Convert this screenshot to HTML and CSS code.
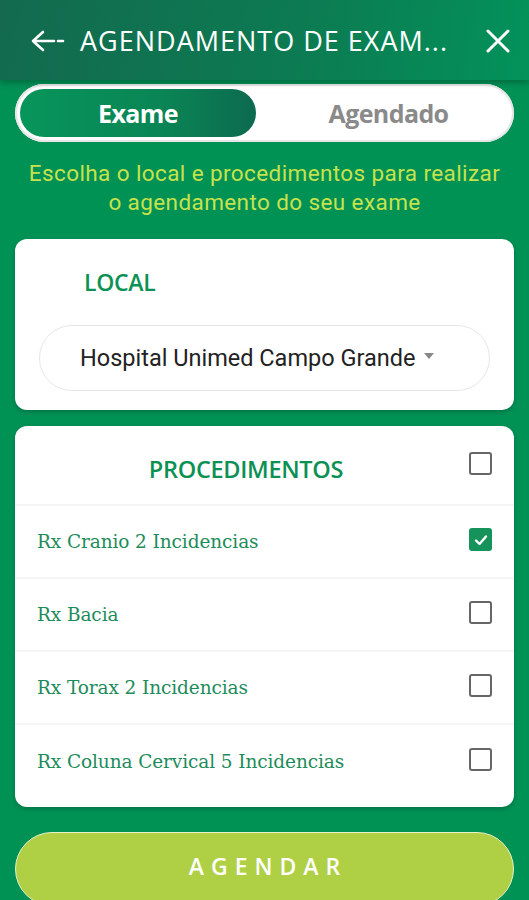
FILE: index.html
```html
<!DOCTYPE html>
<html lang="pt">
<head>
    <meta charset="UTF-8" />
    <meta name="viewport" content="width=device-width, initial-scale=1.0" />
    <title>Agendamento de Exames</title>
    <link rel="stylesheet" href="styles.css">
</head>
<body>
<!-- Barra superior -->
<div class="topbar">
    <svg class="back" width="36" height="24" viewBox="0 0 36 24">
        <path d="M13 3 L3 12 L13 21 M3 12 H24" fill="none" stroke="#fff" stroke-width="2.6" stroke-linecap="round" stroke-linejoin="round"/>
        <path d="M28 12 H33" stroke="#fff" stroke-width="2.6" stroke-linecap="round"/>
    </svg>
    <h1 class="titulo">AGENDAMENTO DE EXAM...</h1>
    <svg class="fechar" width="26" height="26" viewBox="0 0 26 26">
        <path d="M3 3 L23 23 M23 3 L3 23" stroke="#fff" stroke-width="3" stroke-linecap="round"/>
    </svg>
</div>

<div class="conteudo">
    <div class="toggle">
        <button class="aba ativa">Exame</button>
        <button class="aba">Agendado</button>
    </div>

    <p class="instrucao">Escolha o local e procedimentos para realizar o agendamento do seu exame</p>

    <div class="card card-local">
        <h2 class="rotulo">LOCAL</h2>
        <div class="select">
            <span>Hospital Unimed Campo Grande</span>
            <span class="caret"></span>
        </div>
    </div>

    <div class="card card-proc">
        <div class="proc-head">
            <h2 class="rotulo-centro">PROCEDIMENTOS</h2>
            <span class="check"></span>
        </div>
        <div id="listaProcedimentos"></div>
    </div>

    <button class="agendar">AGENDAR</button>
</div>

<script>
    const procedimentos = [
        { nome: 'Rx Cranio 2 Incidencias', marcado: true },
        { nome: 'Rx Bacia', marcado: false },
        { nome: 'Rx Torax 2 Incidencias', marcado: false },
        { nome: 'Rx Coluna Cervical 5 Incidencias', marcado: false }
    ];

    const lista = document.getElementById('listaProcedimentos');
    procedimentos.forEach(function(p) {
        const linha = document.createElement('div');
        linha.classList.add('proc-item');
        linha.innerHTML = `
            <span class="proc-nome">${p.nome}</span>
            <span class="check ${p.marcado ? 'marcado' : ''}">${p.marcado ? '<svg width="16" height="16" viewBox="0 0 16 16"><path d="M3 8.5 L6.5 12 L13 4.5" fill="none" stroke="#fff" stroke-width="2.4" stroke-linecap="round" stroke-linejoin="round"/></svg>' : ''}</span>
        `;
        linha.querySelector('.check').addEventListener('click', function() {
            p.marcado = !p.marcado;
        });
        lista.appendChild(linha);
    });
</script>
</body>
</html>
```

FILE: styles.css
```css
body {
    margin: 0;
    background-color: #009155;
    font-family: Roboto, "Noto Sans", sans-serif;
    height: 900px;
    overflow: hidden;
}

/* Barra superior */
.topbar {
    height: 80px;
    display: flex;
    align-items: center;
    padding: 0 18px 0 30px;
    background: linear-gradient(100deg, #136a4e 0%, #0c7a52 55%, #03925a 100%);
    box-shadow: 0 3px 6px rgba(0,0,0,0.25);
    position: relative;
    z-index: 2;
}

.back {
    margin-right: 14px;
    margin-top: 2px;
}

.titulo {
    flex: 1;
    margin: 0;
    color: #fff;
    font-family: "Open Sans", sans-serif;
    font-weight: 400;
    font-size: 27px;
    letter-spacing: 1px;
    white-space: nowrap;
}

.fechar {
    margin-top: 2px;
}

.conteudo {
    padding: 4px 15px 0 15px;
}

/* Abas */
.toggle {
    display: flex;
    height: 58px;
    background-color: #fff;
    border-radius: 30px;
    padding: 5px;
    box-sizing: border-box;
    box-shadow: inset 0 0 0 2px #e6e6e6;
}

.aba {
    flex: 1;
    border: none;
    background: transparent;
    font-family: "Open Sans", sans-serif;
    font-weight: 700;
    font-size: 25px;
    letter-spacing: -0.6px;
    color: #8a8a8a;
    border-radius: 26px;
    padding: 0;
}

.aba.ativa {
    flex: 0 0 236px;
    color: #fff;
    background: linear-gradient(90deg, #07955b 0%, #0a8555 60%, #0d6a4f 100%);
}

.aba + .aba {
    padding-left: 12px;
}

.instrucao {
    margin: 17px 0 22px 0;
    text-align: center;
    color: #c6e24c;
    font-size: 22.5px;
    letter-spacing: 0.4px;
    line-height: 29px;
    padding: 0 12px;
}

/* Cards */
.card {
    background-color: #fff;
    border-radius: 12px;
    box-shadow: 0 2px 4px rgba(0,0,0,0.2);
    margin-bottom: 16px;
}

.card-local {
    padding: 27px 24px 19px 24px;
}

.rotulo {
    margin: 0 0 27px 45px;
    color: #0c9155;
    font-family: "Open Sans", sans-serif;
    font-weight: 600;
    font-size: 23px;
    letter-spacing: -0.3px;
}

.select {
    height: 66px;
    border: 1px solid #e6e6e6;
    border-radius: 34px;
    display: flex;
    align-items: center;
    padding: 0 40px;
    box-sizing: border-box;
    font-size: 23.5px;
    color: #222;
}

.caret {
    width: 0;
    height: 0;
    border-left: 5px solid transparent;
    border-right: 5px solid transparent;
    border-top: 6px solid #888;
    margin-left: 9px;
    margin-top: -4px;
}

.card-proc {
    padding: 0;
    margin-bottom: 25px;
}

.proc-head {
    height: 80px;
    display: flex;
    align-items: center;
    padding: 0 22px 0 0;
    border-bottom: 2px solid #f5f5f5;
    box-sizing: border-box;
}

.rotulo-centro {
    flex: 1;
    margin: 8px 0 0 0;
    text-align: center;
    color: #0c9155;
    font-family: "Open Sans", sans-serif;
    font-weight: 600;
    font-size: 23.5px;
    letter-spacing: -0.3px;
    padding-left: 8px;
}

.proc-item {
    height: 73px;
    display: flex;
    align-items: center;
    padding: 0 22px;
    border-bottom: 2px solid #f5f5f5;
    box-sizing: border-box;
}

.proc-item:last-child {
    border-bottom: none;
    height: 82px;
    padding-bottom: 10px;
}

.proc-nome {
    flex: 1;
    font-family: "DejaVu Serif", "Liberation Serif", serif;
    font-size: 18.5px;
    color: #1d8c5a;
    letter-spacing: -0.1px;
}

.check {
    width: 23px;
    height: 23px;
    border: 2px solid #666;
    border-radius: 3px;
    box-sizing: border-box;
    display: flex;
    align-items: center;
    justify-content: center;
    margin-top: -4px;
}

.check.marcado {
    background-color: #15935a;
    border-color: #15935a;
}

.agendar {
    display: block;
    width: 100%;
    height: 74px;
    border: 1.5px solid #e8f3c8;
    border-radius: 37px;
    background-color: #afd045;
    color: #fff;
    font-family: "Open Sans", sans-serif;
    font-weight: 600;
    font-size: 23px;
    letter-spacing: 7px;
    padding: 0 0 6px 7px;
}
```
